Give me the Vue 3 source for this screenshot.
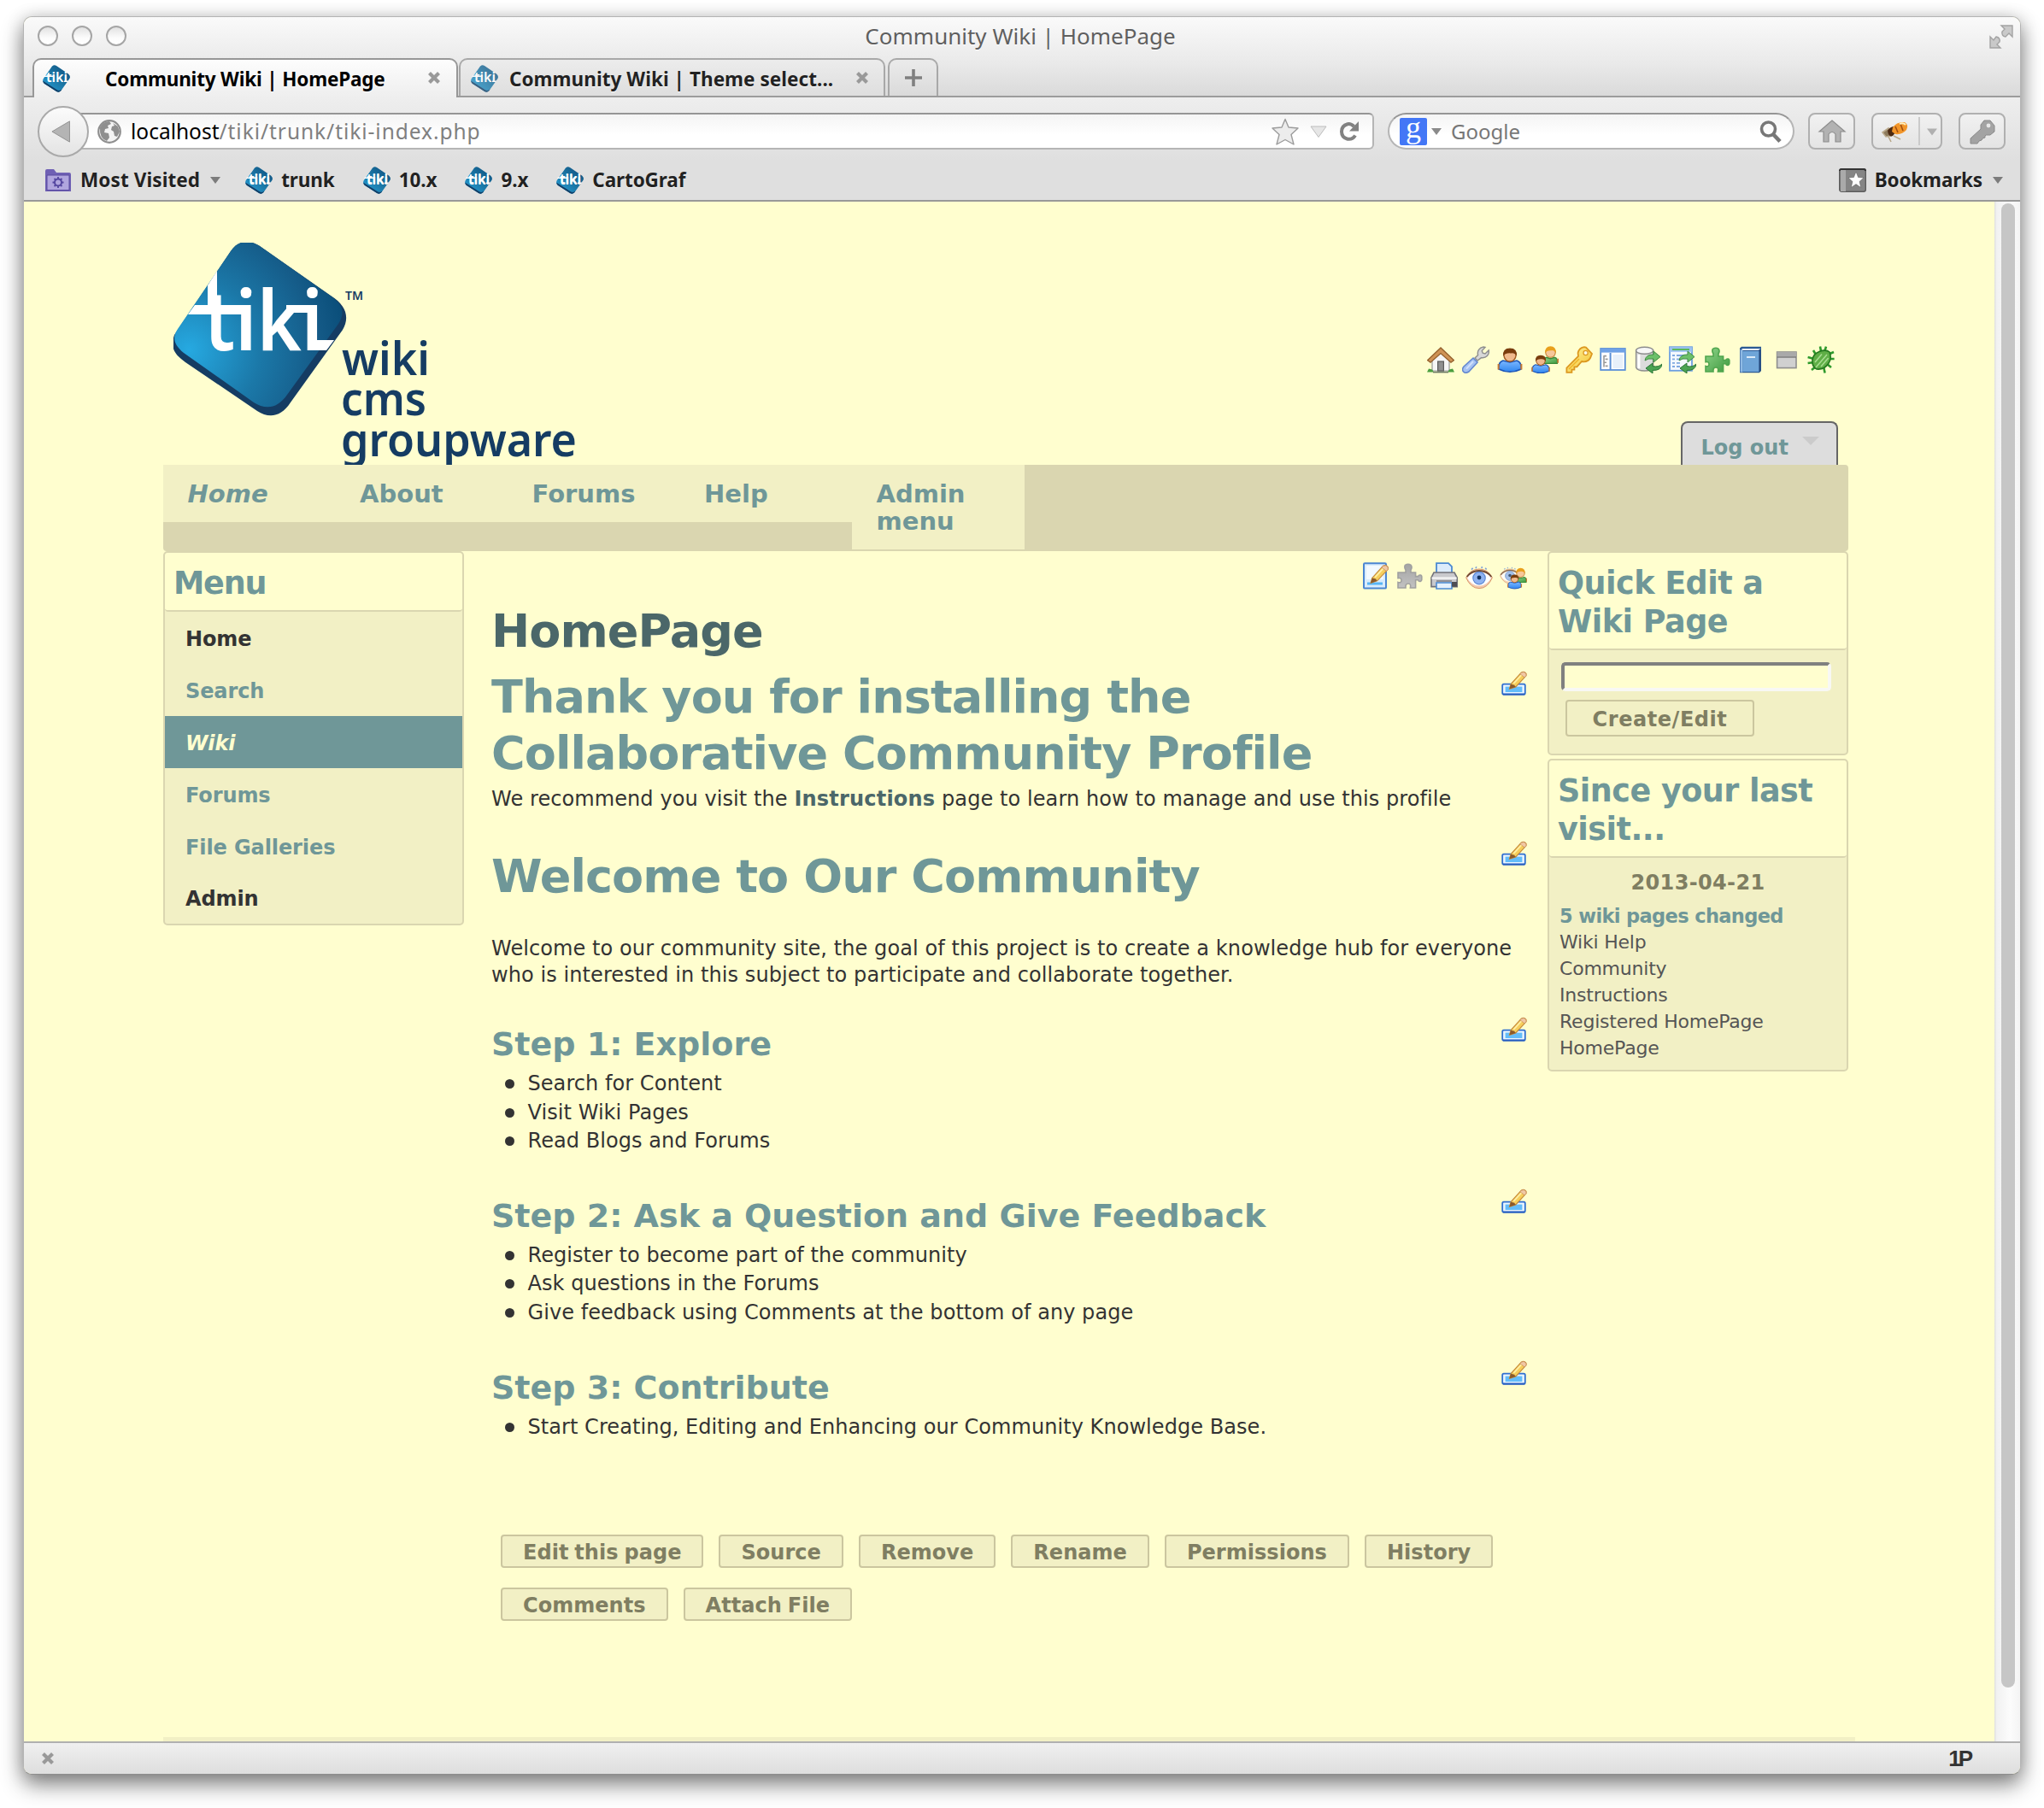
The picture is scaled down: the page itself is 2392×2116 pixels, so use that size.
<script setup>
const bookmarks = ['trunk', '10.x', '9.x', 'CartoGraf']
const adminIcons = ['house', 'wrench', 'user', 'group', 'key', 'sidebar', 'db', 'form', 'plugin', 'book', 'strip', 'bug']
const pageIcons = ['pageedit', 'plugingrey', 'printer', 'eye', 'eyegroup']
const nav = ['Home', 'About', 'Forums', 'Help']
const menu = [
  { label: 'Home', kind: 'dark' },
  { label: 'Search', kind: '' },
  { label: 'Wiki', kind: 'current' },
  { label: 'Forums', kind: '' },
  { label: 'File Galleries', kind: '' },
  { label: 'Admin', kind: 'dark' },
]
const steps = [
  { title: 'Step 1: Explore', items: ['Search for Content', 'Visit Wiki Pages', 'Read Blogs and Forums'] },
  {
    title: 'Step 2: Ask a Question and Give Feedback',
    items: ['Register to become part of the community', 'Ask questions in the Forums', 'Give feedback using Comments at the bottom of any page'],
  },
  { title: 'Step 3: Contribute', items: ['Start Creating, Editing and Enhancing our Community Knowledge Base.'] },
]
const actions = ['Edit this page', 'Source', 'Remove', 'Rename', 'Permissions', 'History', 'Comments', 'Attach File']
const changed = ['Wiki Help', 'Community', 'Instructions', 'Registered HomePage', 'HomePage']
</script>

<template>
  <svg class="sprite" aria-hidden="true">
    <defs>
      <linearGradient id="gTiki" x1="0" y1="1" x2="1" y2="0">
        <stop offset="0" stop-color="#27a5de" /><stop offset=".5" stop-color="#1b76a5" /><stop offset="1" stop-color="#0d4a78" />
      </linearGradient>
      <linearGradient id="gBlue" x1="0" y1="0" x2="0" y2="1">
        <stop offset="0" stop-color="#7db8ff" /><stop offset="1" stop-color="#2f86f0" />
      </linearGradient>
      <linearGradient id="gGreen" x1="0" y1="0" x2="1" y2="1">
        <stop offset="0" stop-color="#8fd48a" /><stop offset="1" stop-color="#3f9a3f" />
      </linearGradient>
      <linearGradient id="gGold" x1="0" y1="0" x2="1" y2="1">
        <stop offset="0" stop-color="#fff3a0" /><stop offset="1" stop-color="#f3c22c" />
      </linearGradient>
      <linearGradient id="gGrey" x1="0" y1="0" x2="0" y2="1">
        <stop offset="0" stop-color="#a4a4a4" /><stop offset="1" stop-color="#c2c2c2" />
      </linearGradient>
    </defs>

    <symbol id="tiki" viewBox="0 0 32 32">
      <path d="M11 1.5Q13.500-.6 16 1L30 10.500Q33 13 31.400 16L21.500 30Q19 33 16 31L2 22Q-1 19.500.8 16Z" fill="url(#gTiki)" />
      <path d="M0 18.500Q.5 20.800 2 22L16 31Q19 33 21.500 30L22.500 28.500Q19.500 31 16.500 29Z" fill="#123e66" />
      <text x="4" y="20" font-family="Noto Sans" font-weight="600" font-size="15.500" textLength="25" lengthAdjust="spacingAndGlyphs" fill="#fff">tiki</text>
      <path d="M2 12.500h10v1.600H1zM25 18.500h5l-1 1.500h-4z" fill="#fff" />
    </symbol>

    <symbol id="house" viewBox="0 0 16 16">
      <path d="M3 8v6.500h10V8L8 3.500z" fill="#f6f6f6" stroke="#9a9a9a" stroke-width=".6" />
      <path d="M8 1 .3 8.300 2 9.600 8 4.300l6 5.300 1.700-1.300z" fill="#cf9356" stroke="#94602c" stroke-width=".7" />
      <rect x="6.300" y="9" width="3.400" height="5.500" fill="#8f8f8f" stroke="#5c5c5c" stroke-width=".6" />
      <path d="M0 15.300 1 13.200l2 .6 1 1.500zM16 15.300l-1-2.100-2 .6-1 1.500z" fill="#4b9e3f" />
      <path d="M3.500 15.300h9" stroke="#6d7a66" stroke-width=".8" />
    </symbol>
    <symbol id="wrench" viewBox="0 0 16 16">
      <path d="M9 8.500 7.500 7 9.300 5.300C8.700 3 10 .8 12.500.5L13.500.7 11.600 2.800l.5 1.300 1.400.4L15.600 2.500c.5 2.500-1.500 4.700-4.300 4.300z" fill="#d8d8d8" stroke="#8e8e8e" stroke-width=".7" />
      <path d="M6.500 7 9 9.500 4 15Q2 16.300.8 15T1 12z" fill="#a5c2f2" stroke="#6488cf" stroke-width=".8" />
      <path d="M6.500 9 2.500 13.300" stroke="#d0e0fb" stroke-width="1" />
    </symbol>
    <symbol id="user" viewBox="0 0 16 16">
      <path d="M1.500 13.500Q1 9.500 4 8.500L8 9.500l4-1Q15 9.500 14.500 13.500 8 16.800 1.500 13.500z" fill="url(#gBlue)" stroke="#1c55b8" stroke-width=".8" />
      <path d="M1.300 10.500v3.300M14.700 10.500v3.300" stroke="#c97a35" stroke-width="1" />
      <circle cx="8" cy="5.500" r="3.500" fill="#f0b98c" stroke="#a25a22" stroke-width=".7" />
      <path d="M4 6Q3.500 1.200 8 1.200T12 6Q11 3.800 8.500 4.200 5 4 4 6z" fill="#7a3d0d" />
    </symbol>
    <symbol id="person2" viewBox="0 0 16 16">
      <path d="M2.500 15Q2 10.500 4.500 10L8 11l3.500-1Q14 10.500 13.500 15z" fill="url(#gGreen)" stroke="#3a8a37" stroke-width=".9" />
      <path d="M14 11v3.500" stroke="#c97a35" stroke-width="1.200" />
      <circle cx="8" cy="6" r="4" fill="#f6c79a" stroke="#c07a2b" stroke-width=".7" />
      <path d="M3.500 6.500Q3.500 1 8 1t4.500 5.500Q11 3.800 8.500 4.400 5 4 3.500 6.500z" fill="#e9a01c" />
    </symbol>
    <symbol id="group" viewBox="0 0 16 16">
      <use href="#person2" x="5.500" y="-.8" width="11.500" height="12" />
      <use href="#user" x="-.5" y="4.500" width="12" height="12" />
    </symbol>
    <symbol id="key" viewBox="0 0 16 16">
      <path d="M11 .6Q8 1 7.300 4l.2 2L.7 12.800v2.600h3v-1.600h1.500v-1.600h1.500L9.500 9Q13 9.700 14.500 7L15.500 4.500 12 .8z" fill="url(#gGold)" stroke="#dc9820" stroke-width=".9" />
      <circle cx="11.800" cy="4" r="1.300" fill="#fffbe0" stroke="#dc9820" stroke-width=".6" />
      <path d="M2 13.500 8 7.500" stroke="#f0b429" stroke-width=".8" />
    </symbol>
    <symbol id="sidebar" viewBox="0 0 16 16">
      <rect x=".6" y="1.500" width="14.300" height="12.500" fill="#fff" stroke="#5b8fd6" stroke-width=".9" />
      <path d="M.6 1.500h14.300v2.300H.6z" fill="#6fa1e6" /><path d="M6.300 4v10" stroke="#5b8fd6" stroke-width="1" />
      <path d="M2.500 5.500v6.700M2.500 5.800h1.500M3.300 7.700h1.500M2.500 9.600h1.500M3.300 11.700h1.500" stroke="#9a9a9a" stroke-width=".8" />
      <path d="M7.700 5h6v8h-6z" fill="#e8f0fa" />
    </symbol>
    <symbol id="sync" viewBox="0 0 16 16">
      <path d="M6 8.500Q6.500 4.800 11 5V3l4 3.300-4 3.200V7.500Q7.500 7 6 8.500z" fill="#6cc069" stroke="#3d8a42" stroke-width=".5" />
      <path d="M16 10.500Q15.500 14.500 10.500 14.200V16l-4-3 4-3v1.800Q14 12.500 16 10.500z" fill="#4ba352" stroke="#2b7536" stroke-width=".5" />
    </symbol>
    <symbol id="db" viewBox="0 0 16 16">
      <path d="M.8 2.500v10Q1.500 14.500 5.800 14.500t5-2v-10z" fill="#dcdcdc" stroke="#8d8d8d" stroke-width=".7" />
      <ellipse cx="5.800" cy="2.600" rx="5" ry="2" fill="#f7f7f7" stroke="#8d8d8d" stroke-width=".7" />
      <path d="M2.500 5v8" stroke="#fff" stroke-width="1.400" /><use href="#sync" width="16" height="16" />
    </symbol>
    <symbol id="form" viewBox="0 0 16 16">
      <rect x=".5" y=".6" width="13" height="13.800" fill="#f4f8fd" stroke="#6d9fe0" stroke-width=".9" />
      <path d="M.5.6h13v2.800H.5z" fill="#9cc2f0" /><path d="M2 2h10" stroke="#5cb85a" stroke-width="1" />
      <path d="M2 5.500h1.500M4.500 5.500h4M2 7.700h1.500M4.500 7.700h2M2 9.900h1.500M4.500 9.900h2M2 12h1.500M4.500 12h2" stroke="#7fa8e0" stroke-width=".9" />
      <use href="#sync" width="16" height="16" />
    </symbol>
    <symbol id="plugin" viewBox="0 0 16 16">
      <path d="M1 6h4.500V4.500Q4.500 3 5.200 1.700 7 .6 8.600 1.700 9.500 3 8.500 4.500V6h2.800v2.300h1.500q.3-1 1.400-.8.9.3.7 1.800.2 1.600-.8 1.900-1.100.1-1.300-.8h-1.500V15H8.200q.6-2.500-1.200-2.500T5.500 15H1v-3.300q2 .6 2-1.100T1 9.300z" fill="url(#gGreen)" stroke="#4fa54e" stroke-width=".8" />
    </symbol>
    <symbol id="plugingrey" viewBox="0 0 16 16">
      <path d="M1 6h4.500V4.500Q4.500 3 5.200 1.700 7 .6 8.600 1.700 9.500 3 8.500 4.500V6h2.800v2.300h1.500q.3-1 1.400-.8.9.3.7 1.800.2 1.600-.8 1.900-1.100.1-1.300-.8h-1.500V15H8.200q.6-2.500-1.200-2.500T5.500 15H1v-3.300q2 .6 2-1.100T1 9.300z" fill="url(#gGrey)" stroke="#a0a0a0" stroke-width=".8" />
    </symbol>
    <symbol id="book" viewBox="0 0 16 16">
      <path d="M1 1.200 2 .4h11.500v13.800l-1 1.400H1z" fill="#2c5a94" /><path d="M2.700 3h10v12h-10z" fill="#6fa5d8" />
      <path d="M1.300 2v13.300h1.400V2.500z" fill="#8fbbe6" /><path d="M2.300 2h10.500" stroke="#e8f1fa" stroke-width="1" />
      <path d="M5 6.500h5" stroke="#dcebf8" stroke-width="1" /><path d="M12.700 2v13" stroke="#24497d" stroke-width="1" />
    </symbol>
    <symbol id="strip" viewBox="0 0 16 16">
      <rect x="2.300" y="3.500" width="11.200" height="9.300" fill="#d0d0d0" stroke="#8e8e8e" stroke-width=".8" />
      <path d="M2.300 3.500h11.200v2.800H2.300z" fill="#a9a9a9" /><path d="M2.300 6.500h11.200" stroke="#777" stroke-width=".7" />
    </symbol>
    <symbol id="bug" viewBox="0 0 16 16">
      <path d="M3.500 2.500 5 5M7.500.3 8 3M11 .3 10 3.500M15.500 3.500 12 5M15.800 7.500h-3M14 12.500l-2.500-2M10.300 15.800 9.500 12M.3 6.500 4 7.500M.3 10 4 9.500M2.500 14 5 12" stroke="#2e9a2c" stroke-width="1.300" fill="none" />
      <path d="M3 8Q3.500 4.500 7 3.200 11 1.800 13 3.500 14.500 7 12.500 10 10 14 5.500 13.500 2.500 12 3 8z" fill="#5fae46" stroke="#24781f" stroke-width=".8" />
      <path d="M5 12.500 11.500 5M4.500 9.500 8.500 4.800M8 12 12.300 7" stroke="#a6dc90" stroke-width=".8" />
    </symbol>
    <symbol id="pencil" viewBox="0 0 16 16">
      <path d="M3 13.500 4 10 11.500 1.700Q13.500.5 15 2.500L15 4 7.500 12z" fill="#f6cf5c" stroke="#c58a3a" stroke-width=".7" />
      <path d="M11.500 1.700Q13.500.5 15 2.500L15 4 13.800 5.200 10.600 2.700z" fill="#f0c8a4" stroke="#c98f5c" stroke-width=".5" />
      <path d="M3 13.500 4 10l2.500.6L7.500 12z" fill="#8a5a2c" /><path d="M6 9.500 11.500 3.600" stroke="#fff0a8" stroke-width="1" />
    </symbol>
    <symbol id="secedit" viewBox="0 0 16 16">
      <rect x=".6" y="7.800" width="13.300" height="6" rx=".8" fill="#eaf5ff" stroke="#2f6fd0" stroke-width=".9" />
      <rect x="2.300" y="9.300" width="9.900" height="3.200" fill="#63bdfa" />
      <path d="M.9 13.800h12.800" stroke="#2a5fc0" stroke-width="1" /><use href="#pencil" x="2.300" y="-.3" width="13" height="13" />
    </symbol>
    <symbol id="pageedit" viewBox="0 0 16 16">
      <rect x="1" y=".6" width="13" height="14.700" rx=".6" fill="#d9ecfc" stroke="#4b86d2" stroke-width="1" />
      <path d="M2.500 2h10v8h-10z" fill="#f2f9ff" /><path d="M3 12.500h9" stroke="#57b5f5" stroke-width="1.500" />
      <use href="#pencil" x="2.500" y=".8" width="13.500" height="13.500" />
    </symbol>
    <symbol id="printer" viewBox="0 0 16 16">
      <path d="M3.500 7V.6h7l2 2V7z" fill="#dcecfb" stroke="#4b8ad2" stroke-width=".9" />
      <path d="M2 6h12l1.600 3v5.300H.5V9z" fill="#c9c9cd" stroke="#707078" stroke-width=".8" />
      <path d="M.8 9.300h14.500" stroke="#f4f4f4" stroke-width="1.200" /><path d="M3.500 10.500h9v1h-9z" fill="#8f8f95" />
      <path d="M3.500 12h9v3.500h-9z" fill="#e6f1fc" stroke="#4b8ad2" stroke-width=".8" /><path d="M12.500 11.500h3v2.800h-3z" fill="#4e4e54" />
    </symbol>
    <symbol id="eye" viewBox="0 0 16 16">
      <path d="M.3 9Q3 4 8 4t7.700 5Q13 15.300 8 15.300T.3 9z" fill="#f3c9ae" stroke="#d9976a" stroke-width=".5" />
      <path d="M1 9.300Q3.500 5.500 8 5.500t7 3.800Q12.500 13.800 8 13.800T1 9.300z" fill="#fff" />
      <path d="M.8 8.500Q3.500 5 8 5t7.200 3.500" fill="none" stroke="#6f4a35" stroke-width=".9" />
      <circle cx="8" cy="9.300" r="3.600" fill="#8fb2f0" stroke="#5a86d4" stroke-width=".6" /><circle cx="8" cy="9" r="1.200" fill="#12315f" />
      <path d="M3.500 4.300 4.300 3.400M6 3.600l.4-1M9.500 3.600l.2-1M12.300 4.300l-.7-.9" stroke="#7d9fd8" stroke-width=".8" />
    </symbol>
    <symbol id="eyegroup" viewBox="0 0 16 16">
      <use href="#eye" x="0" y="1" width="12" height="12" opacity=".8" />
      <use href="#person2" x="7.500" y="2.800" width="9.500" height="9.500" /><use href="#user" x="4" y="6.500" width="9.500" height="9.500" />
    </symbol>
    <symbol id="folder" viewBox="0 0 32 28">
      <path d="M1 27V3q0-2 2-2h8l3 4h15q2 0 2 2v20z" fill="#6f60b4" />
      <path d="M3 25.500V8h26v17.500z" fill="#b0a5de" stroke="#5a4aa0" stroke-width="1" />
      <circle cx="16" cy="16.500" r="4" fill="none" stroke="#5547a0" stroke-width="2" />
      <path d="M16 10v3M16 20v3M9.500 16.500h3M19.500 16.500h3M11.500 12l2 2M18.500 19l2 2M20.500 12l-2 2M13.500 19l-2 2" stroke="#5547a0" stroke-width="1.800" />
    </symbol>
    <symbol id="bmstar" viewBox="0 0 32 28">
      <rect x=".7" y=".7" width="30.600" height="26.600" rx="2.500" fill="#858585" stroke="#5c5c5c" stroke-width="1.400" />
      <path d="M1 3q0-2 2-2h26q2 0 2 2" fill="none" stroke="#333" stroke-width="2" /><path d="M2 2h6v25H2z" fill="#aaa" />
      <path d="m20 4 2.600 6.500 6.400.5-4.900 4.400 1.600 7L20 18.600l-5.700 3.800 1.600-7L11 11l6.400-.5z" fill="#fff" stroke="#555" stroke-width=".5" />
    </symbol>
    <symbol id="xmark" viewBox="0 0 16 16"><path d="m2.500 2.500 11 11m0-11-11 11" stroke="#999" stroke-width="4.200" /></symbol>
  </svg>

  <div class="desk">
    <div class="window">
      <div class="top">
        <div class="titlebar">
          <div class="lights"><i /><i /><i /></div>
          <div class="title">Community Wiki | HomePage</div>
          <svg class="full" viewBox="0 0 28 28">
            <path d="M14 1h13v13l-4-4-4 4Q14 13 15 8l3-3zM1 14l4 4 3-4q5 1 4 6l-3 3 4 4H1z" fill="#c9c9c9" stroke="#a3a3a3" stroke-width="1.400" />
          </svg>
        </div>
        <div class="tabs">
          <div class="tab active">
            <svg class="fav"><use href="#tiki" /></svg><span class="tabtext first">Community Wiki | HomePage</span>
            <svg class="x"><use href="#xmark" /></svg>
          </div>
          <div class="tab second">
            <svg class="fav dim"><use href="#tiki" /></svg><span class="tabtext">Community Wiki | Theme select...</span>
            <svg class="x"><use href="#xmark" /></svg>
          </div>
          <div class="tab new"><svg viewBox="0 0 20 20"><path d="M10 0v20M0 10h20" stroke="#808080" stroke-width="3.600" /></svg></div>
        </div>
      </div>

      <div class="toolbar">
        <div class="navrow">
          <div class="back"><svg viewBox="0 0 60 60"><path d="M16 30 38 17v26z" fill="#b4b4b4" stroke="#8f8f8f" stroke-width="1" /></svg></div>
          <div class="url">
            <svg class="globe" viewBox="0 0 28 28">
              <circle cx="14" cy="14" r="12.800" fill="#f4f4f4" stroke="#8f8f8f" stroke-width="2.200" />
              <path d="M3 9Q7 2 14 2l2 3-4 2 1 3-4 1-1 4 5 1 1 5-3 4Q2 22 3 9zM18 4l6 4 2 6-3 6-3-1-1-5-3-2 1-4 3-1z" fill="#8f8f8f" />
            </svg>
            <span class="addr"><b>localhost</b>/tiki/trunk/tiki-index.php</span>
            <svg class="star" viewBox="0 0 32 32"><path d="m16 1.500 4 9.500 11 1-8 7.500L26 31l-10-5.500L6 31l3-11.500L1 12l11-1z" fill="#ececec" stroke="#9c9c9c" stroke-width="1.400" stroke-linejoin="round" /></svg>
            <svg class="drop" viewBox="0 0 20 14"><path d="M1 1h18l-9 12.500z" fill="#e6e6e6" stroke="#bdbdbd" /></svg>
            <svg class="reload" viewBox="0 0 24 24"><path d="M17.500 6Q14 2.500 10 3.200 3 5 3 12t7 8.700q6 .8 9-4.200" fill="none" stroke="#828282" stroke-width="4" /><path d="M23 0v11.500H12z" fill="#828282" /></svg>
          </div>
          <div class="search">
            <span class="gicon">g</span>
            <svg class="tri" viewBox="0 0 12 8"><path d="M0 0h12L6 8z" fill="#8a8a8a" /></svg>
            <span class="ph">Google</span>
            <svg class="mag" viewBox="0 0 26 26"><circle cx="10.500" cy="10" r="8" fill="none" stroke="#777" stroke-width="3.600" /><path d="m16 16 8 8.500" stroke="#777" stroke-width="4.600" /></svg>
          </div>
          <div class="btn home"><svg viewBox="0 0 32 27"><path d="M16 1 1 14h5v12h6v-9q4-5 8 0v9h6V14h5z" fill="#b2b2b2" stroke="#8e8e8e" stroke-width="1.200" /></svg></div>
          <div class="btn bee">
            <svg class="beeic" viewBox="0 0 32 26">
              <path d="M1 14 8 9l6 3-3 6-6 1zM8 19l3 6M14 18l8 4" fill="#8d7a5c" stroke="#b9a98c" stroke-width="1.600" />
              <path d="M7 12q3-5 8-5l2 6-4 5q-5 2-6-6z" fill="#4c2a12" /><path d="M13 8Q18 1 27 2q5 3 2 9-5 6-13 5l-4-3z" fill="#f2962a" />
              <path d="m16 7 3 7M22 4l3 8" stroke="#a44f0e" stroke-width="1.600" /><path d="M21 4q4-2 7 1" stroke="#fff0c0" stroke-width="2" fill="none" />
            </svg>
            <span class="split"><svg viewBox="0 0 12 8"><path d="M0 0h12L6 8z" fill="#b0b0b0" /></svg></span>
          </div>
          <div class="btn keybtn"><svg viewBox="0 0 28 28"><path d="M16 1h7l5 6v7l-5 4h-5l-1 1v2l-3 1-1 2-3 1-2 3H0v-6l12-11V6z" fill="#a3a3a3" stroke="#8a8a8a" /><circle cx="21" cy="7" r="2.400" fill="#e8e8e8" /></svg></div>
        </div>
        <div class="marks">
          <svg class="fold"><use href="#folder" /></svg><span class="mv">Most Visited</span>
          <svg class="tri" viewBox="0 0 12 8"><path d="M0 0h12L6 8z" fill="#7c7c7c" /></svg>
          <div class="marklist">
            <span v-for="b in bookmarks" :key="b" class="mark"><svg class="fav"><use href="#tiki" /></svg>{{ b }}</span>
          </div>
          <svg class="fold right"><use href="#bmstar" /></svg><span class="bk">Bookmarks</span>
          <svg class="tri" viewBox="0 0 12 8"><path d="M0 0h12L6 8z" fill="#7c7c7c" /></svg>
        </div>
      </div>

      <div class="view">
        <div class="content">
          <div class="header">
            <svg class="logo" viewBox="0 0 480 260">
              <defs>
                <radialGradient id="face" gradientUnits="userSpaceOnUse" cx="18" cy="125" r="200">
                  <stop offset="0" stop-color="#26a9e1" /><stop offset=".42" stop-color="#1b78a8" /><stop offset=".75" stop-color="#155b88" /><stop offset="1" stop-color="#054873" />
                </radialGradient>
              </defs>
              <path d="M67 10C76-4 90-3 101 4L184 62C203 74 206 88 198 102L137 187C126 204 112 206 98 197L14 140C-2 129-3 120 1 108Z" fill="#153c63" />
              <path d="M67 10C76-4 90-3 101 4L182 61C199 72 201 82 193 95L133 178C122 194 108 196 94 187L12 129C-1 118-1 110 5 101Z" fill="url(#face)" />
              <g fill="#fff">
                <path d="M40 50 51 33v45H40zM25 73h60v11H17zM132 73h36v9h-36zM157 114h31l-9 12h-22z" />
                <text x="36" y="126" font-family="Noto Sans" font-size="97" font-weight="600" textLength="139" lengthAdjust="spacingAndGlyphs">tiki</text>
              </g>
              <g fill="#153c63" font-family="Noto Sans">
                <text x="201" y="67" font-size="15" font-weight="600" textLength="21" lengthAdjust="spacingAndGlyphs">TM</text>
                <g font-size="54" font-weight="600">
                  <text x="197" y="154.500" textLength="103" lengthAdjust="spacingAndGlyphs">wiki</text>
                  <text x="196" y="202" textLength="100" lengthAdjust="spacingAndGlyphs">cms</text>
                  <text x="196" y="250" textLength="276" lengthAdjust="spacingAndGlyphs">groupware</text>
                </g>
              </g>
            </svg>
            <div class="headright">
              <div class="adminicons"><svg v-for="n in adminIcons" :key="n"><use :href="'#' + n" /></svg></div>
              <div class="logout">Log out<svg viewBox="0 0 20 10"><path d="M0 0h20L10 10z" fill="#cbcbcb" /></svg></div>
            </div>
          </div>

          <div class="nav">
            <a v-for="n in nav" :key="n" :class="{ here: n === 'Home' }">{{ n }}</a>
            <a class="tall">Admin<br />menu</a>
          </div>

          <div class="cols">
            <div class="panel side">
              <h3>Menu</h3>
              <a v-for="m in menu" :key="m.label" :class="m.kind">{{ m.label }}</a>
            </div>

            <div class="main">
              <div class="pageicons"><svg v-for="n in pageIcons" :key="n"><use :href="'#' + n" /></svg></div>
              <h1 class="pagetitle">HomePage</h1>
              <section class="s-thanks">
                <h1>Thank you for installing the<br />Collaborative Community Profile</h1>
                <svg class="edit"><use href="#secedit" /></svg>
              </section>
              <p>We recommend you visit the <b>Instructions</b> page to learn how to manage and use this profile</p>
              <section class="s-welcome">
                <h1>Welcome to Our Community</h1>
                <svg class="edit"><use href="#secedit" /></svg>
              </section>
              <p class="intro">Welcome to our community site, the goal of this project is to create a knowledge hub for everyone<br />who is interested in this subject to participate and collaborate together.</p>
              <template v-for="s in steps" :key="s.title">
                <section class="s-step">
                  <h2>{{ s.title }}</h2>
                  <svg class="edit"><use href="#secedit" /></svg>
                </section>
                <ul><li v-for="t in s.items" :key="t">{{ t }}</li></ul>
              </template>
              <div class="actions"><span v-for="a in actions" :key="a">{{ a }}</span></div>
            </div>

            <div class="rightcol">
              <div class="panel quick">
                <h3>Quick Edit a<br />Wiki Page</h3>
                <div class="input" />
                <div class="create">Create/Edit</div>
              </div>
              <div class="panel since">
                <h3>Since your last<br />visit...</h3>
                <div class="date">2013-04-21</div>
                <div class="count">5 wiki pages changed</div>
                <div v-for="c in changed" :key="c" class="chg">{{ c }}</div>
              </div>
            </div>
          </div>
          <div class="footstrip" />
        </div>
        <div class="scroll"><div class="thumb" /></div>
      </div>

      <div class="status">
        <svg class="x"><use href="#xmark" /></svg>
        <span class="onep">1P</span>
      </div>
    </div>
  </div>
</template>

<style>
body { background: #fff; }
</style>

<style scoped>
* { box-sizing: border-box; }
.sprite { position: absolute; width: 0; height: 0; }
svg { display: block; flex: none; overflow: visible; }
.desk { width: 2392px; height: 2116px; padding: 19px 0 0 27px; overflow: hidden; }
.window {
  width: 2338px; height: 2058px; display: flex; flex-direction: column;
  border-radius: 10px; overflow: hidden; border: 1px solid #b4b4b4; border-bottom-color: #8e8e8e;
  font-family: "Noto Sans", "Open Sans", sans-serif; background: #fffecf;
  box-shadow: 0 12px 26px rgba(0, 0, 0, .45), 0 2px 20px rgba(0, 0, 0, .18);
}
.top { height: 94px; background: linear-gradient(#fafafa, #e9e9e9 60%, #dadada); border-bottom: 2px solid #9c9c9c; flex: none; }
.titlebar { height: 48px; display: grid; grid-template-columns: 1fr auto 1fr; padding: 0 8px 0 16px; }
.lights { display: flex; gap: 16px; padding-top: 10px; }
.lights i { width: 24px; height: 24px; border-radius: 50%; border: 2px solid #a5a5a5; background: linear-gradient(#e2e2e2, #fbfbfb 60%, #fff); }
.title { font-size: 26px; line-height: 36px; padding-top: 4px; color: #5f5f5f; text-shadow: 0 1px #fff; margin-right: 12px; }
.full { width: 28px; height: 28px; margin: 9px 0 0; justify-self: end; }
.tabs { height: 46px; display: flex; padding-left: 10px; }
.tab { height: 44px; border: 2px solid #a8a8a8; border-bottom: 0; border-radius: 10px 10px 0 0; display: flex; align-items: center; color: #222; }
.tab.active { width: 498px; height: 46px; background: linear-gradient(#fdfdfd, #eeeeee); border-color: #979797; padding: 0 18px 1px 10px; color: #000; }
.tab.second { width: 499px; margin-left: 1px; padding: 2px 17px 0 12px; background: linear-gradient(#ececec, #dedede); }
.tab.new { width: 59px; margin-left: 3px; justify-content: center; }
.tab.new svg { width: 20px; height: 20px; }
.fav { width: 32px; height: 32px; }
.fav.dim { opacity: .8; }
.tab .x { width: 16px; height: 16px; margin: -2px 0 0 auto; }
.tabtext { font-size: 22.500px; font-weight: 700; line-height: 30px; white-space: nowrap; margin-left: 13px; text-shadow: 0 1px #fff; letter-spacing: .05px; padding-top: 2px; }
.tabtext.first { margin-left: 41px; letter-spacing: -.17px; }
.toolbar { height: 122px; flex: none; background: linear-gradient(#eeeeee, #dfdfdf 62%, #dfdfdf); border-bottom: 2px solid #999; }
.navrow { height: 70px; display: flex; align-items: flex-start; padding: 18px 16px 0; }
.back { width: 60px; height: 60px; margin-top: -8px; border-radius: 50%; border: 2px solid #a9a9a9; background: linear-gradient(#fbfbfb, #e4e4e4); z-index: 1; }
.back svg { width: 56px; height: 56px; }
.url { width: 1518px; height: 43px; margin-left: -14px; background: linear-gradient(#f4f4f4, #fff 60%); border: 2px solid #b5b5b5; border-top-color: #959595; border-radius: 0 6px 6px 0; display: flex; align-items: center; padding: 0 15px 0 22px; }
.globe { width: 28px; height: 28px; }
.addr { font-size: 24.500px; line-height: 36px; color: #808080; margin-left: 11px; letter-spacing: .950px; padding-top: 1px; }
.addr b { font-weight: 400; color: #000; letter-spacing: 0; }
.star { width: 32px; height: 32px; margin-left: auto; }
.drop { width: 20px; height: 14px; margin-left: 13px; }
.reload { width: 24px; height: 24px; margin-left: 14px; }
.search { width: 476px; height: 43px; margin-left: 16px; border: 2px solid #b5b5b5; border-top-color: #959595; border-radius: 22px; background: linear-gradient(#f4f4f4, #fff 60%); display: flex; align-items: center; padding: 0 13px 0 12px; }
.gicon { width: 32px; height: 32px; border-radius: 2px; background: #4377f6; color: #fff; font: 36px/23px "Liberation Serif", serif; text-align: center; }
.tri { width: 12px; height: 8px; }
.search .tri { margin-left: 5px; }
.ph { font-size: 24px; line-height: 36px; color: #777; margin-left: 11px; padding-top: 1px; }
.mag { width: 26px; height: 26px; margin-left: auto; }
.btn { height: 43px; border: 2px solid #b0b0b0; border-radius: 8px; background: linear-gradient(#f1f1f1, #e4e4e4); display: flex; align-items: center; justify-content: center; }
.home { width: 55px; margin-left: 16px; }
.home svg { width: 32px; height: 27px; }
.bee { width: 83px; margin-left: 19px; justify-content: flex-start; padding-left: 10px; }
.beeic { width: 32px; height: 26px; }
.split { height: 33px; border-left: 2px solid #cacaca; margin-left: 11px; padding: 13px 0 0 8px; }
.split svg { width: 12px; height: 9px; }
.keybtn { width: 55px; margin-left: 19px; }
.keybtn svg { width: 28px; height: 28px; }
.marks { height: 50px; display: flex; align-items: center; padding: 3px 20px 0 24px; font-size: 22.500px; font-weight: 700; color: #222; line-height: 32px; text-shadow: 0 1px #f4f4f4; letter-spacing: .1px; }
.fold { width: 32px; height: 28px; }
.mv { margin-left: 10px; }
.marks .tri { margin-left: 12px; }
.marklist { display: flex; gap: 33px; margin-left: 29px; }
.mark { display: flex; align-items: center; gap: 10px; letter-spacing: -.1px; }
.fold.right { margin-left: auto; }
.bk { margin-left: 10px; letter-spacing: -.17px; }

.view { flex: 1; display: flex; min-height: 0; }
.content { flex: 1; display: flex; flex-direction: column; padding-left: 163px; font-family: "DejaVu Sans", Verdana, sans-serif; min-width: 0; }
.header { width: 1972px; height: 308px; display: flex; justify-content: space-between; flex: none; }
.logo { width: 480px; height: 260px; margin: 48px 0 0 12px; overflow: hidden; }
.headright { display: flex; flex-direction: column; align-items: flex-end; padding: 169px 12px 0 0; }
.adminicons { display: flex; gap: 8.450px; margin-right: 4px; }
.adminicons svg, .pageicons svg { width: 32px; height: 32px; }
.logout { width: 184px; height: 51px; margin-top: 56px; border: 2px solid #666; border-bottom: 0; border-radius: 8px 8px 0 0; background: #ddd; color: #6f9798; font-weight: 700; font-size: 24px; line-height: 32px; padding: 13px 0 0 21.500px; display: flex; }
.logout svg { width: 20px; height: 10px; margin: 3px 0 0 16px; }
.nav { width: 1972px; height: 101px; flex: none; background: #dad6b0; border-radius: 0 4px 4px 4px; display: flex; align-items: flex-start; }
.nav a { width: 201.500px; height: 67px; background: #f2f0c5; color: #6f9798; font-weight: 700; font-size: 29px; line-height: 32px; padding: 18px 0 0 28.500px; }
.nav a.here { font-style: italic; }
.nav a.tall { height: 99px; width: 202px; }
.cols { display: flex; align-items: flex-start; }
.panel { width: 352px; border: 2px solid #dad6b0; border-radius: 5px; background: #f2f0c5; }
.panel h3 { margin: 0; background: #fffecf; border-bottom: 2px solid #dad6b0; border-radius: 4px; font-size: 36.500px; line-height: 45px; color: #6f9798; padding: 13px 0 9px 10px; white-space: nowrap; letter-spacing: -.5px; }
.side h3 { padding: 13px 0 9px 10px; height: 69px; letter-spacing: -1.200px; }
.side a { display: block; height: 60.900px; line-height: 64px; font-size: 24px; font-weight: 700; color: #6f9798; padding-left: 24px; letter-spacing: -.1px; }
.side a.dark { color: #333; }
.side a.current { background: #6f9798; color: #fffecf; font-style: italic; }
.main { width: 1212px; margin-left: 32px; color: #333; }
.pageicons { display: flex; justify-content: flex-end; gap: 8.300px; margin-top: 13px; height: 32px; }
h1, h2 { margin: 0; color: #6f9798; white-space: nowrap; }
h1 { font-size: 54px; line-height: 66px; letter-spacing: -.920px; }
.pagetitle { color: #4b6769; margin-top: 16px; }
section { display: flex; justify-content: space-between; align-items: flex-start; }
.edit { width: 32px; height: 32px; margin-right: -2px; }
.s-thanks { margin-top: 11px; }
.s-thanks .edit { margin-top: 2px; }
p { margin: 5px 0 0; font-size: 24px; line-height: 31px; white-space: nowrap; letter-spacing: .085px; }
p b { color: #4b6769; letter-spacing: .2px; }
.s-welcome { margin-top: 33px; }
.s-welcome h1 { margin-top: 9px; }
.intro { margin-top: 36px; }
.s-step { margin-top: 38px; }
.intro + .s-step { margin-top: 33px; }
h2 { font-size: 38px; line-height: 46px; margin-top: 9px; padding-bottom: 1px; }
ul { margin: 6px 0 0; padding: 0 0 0 42.500px; list-style: none; }
li { font-size: 24px; line-height: 33.600px; white-space: nowrap; position: relative; letter-spacing: .06px; }
li::before { content: ""; position: absolute; left: -27px; top: 11px; width: 11px; height: 11px; border-radius: 50%; background: #333; }
.actions { display: flex; flex-wrap: wrap; gap: 23px 18px; padding: 109px 0 0 11px; }
.actions span, .create { height: 39px; border: 2px solid #cbc69f; border-radius: 4px; background: #f2f0c5; color: #7f7e62; font-size: 24px; font-weight: 700; line-height: 38px; padding: 0 24px; word-spacing: -1.500px; }
.actions span { letter-spacing: .04px; }
.rightcol { margin-left: 24px; }
.quick { height: 239px; }
.input { width: 316px; height: 34px; margin: 14px 0 0 14px; border: 4px solid; border-color: #808080 #f8f8f4 #f8f8f4 #808080; border-radius: 5px; background: #fffecf; }
.create { width: 221px; height: 43px; margin: 10px 0 0 19px; padding: 0; text-align: center; letter-spacing: .55px; line-height: 42px; }
.since { height: 366px; margin-top: 4px; }
.date { font-size: 24px; font-weight: 700; color: #7f7e62; text-align: center; line-height: 32px; padding-top: 13px; letter-spacing: .35px; }
.count { font-size: 22.500px; font-weight: 700; color: #6f9798; line-height: 32px; margin: 7px 0 0 12px; white-space: nowrap; letter-spacing: -.63px; }
.chg { font-size: 22px; line-height: 31px; color: #555; margin-left: 12px; letter-spacing: -.22px; }
.count + .chg { margin-top: -1px; }
.footstrip { width: 1980px; height: 5px; background: #f2f0c5; margin-top: auto; flex: none; }
.scroll { width: 30px; background: linear-gradient(90deg, #dedede, #f1f1f1 8%, #fcfcfc 60%, #f4f4f4); padding: 2px 0 0 8px; }
.thumb { width: 16px; height: 1737px; border-radius: 8px; background: #c6c6c6; }
.status { height: 38px; flex: none; border-top: 2px solid #b0b0b0; background: linear-gradient(#f0f0f0, #dedede); display: flex; align-items: center; justify-content: space-between; padding: 0 58px 0 20px; }
.status .x { width: 16px; height: 16px; }
.onep { font: 700 26px/36px "Liberation Sans", sans-serif; letter-spacing: -3px; color: #333; }
</style>
